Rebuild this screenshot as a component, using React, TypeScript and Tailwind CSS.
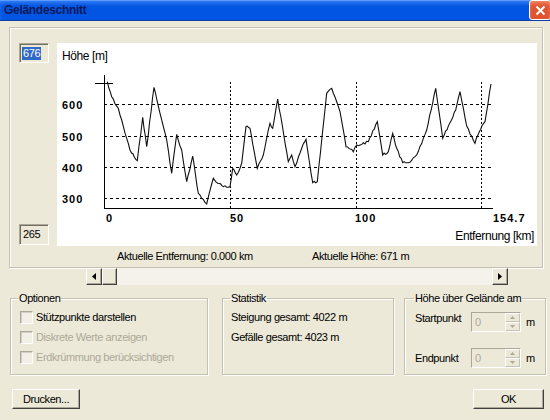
import React from "react";

const pts: [number, number][] = [
  [107.3, 81.7], [111.7, 96.7], [118.3, 108.3], [121.7, 120], [130, 150], [137.3, 160.7],
  [142.7, 117.3], [146.7, 146.7], [154, 87.3], [160, 113.3], [166.7, 140], [171.7, 173.3],
  [176.7, 134.3], [181.7, 150], [186.7, 181.7], [192.7, 156], [198.3, 193.3], [206.7, 204],
  [213.3, 178.3], [217.7, 183.3], [223.3, 186.7], [230, 186.7], [232.7, 168.3], [236.7, 175],
  [241.7, 163.3], [246, 126.7], [250, 128.3], [257.3, 168.3], [263.3, 155], [270, 123.3],
  [272.7, 128.3], [277.7, 99], [288.3, 161.7], [291.7, 155], [295, 166.7], [301.7, 148.3],
  [306, 139.3], [312.7, 182.7], [317.3, 181.7], [326.7, 93.3], [331.7, 88.3], [340, 111.7],
  [346, 146.7], [353.3, 151.7], [356.7, 145], [368.3, 141.7], [377.3, 121.7], [382.7, 155],
  [388.3, 151.7], [392.7, 133.3], [396.7, 148.3], [402.7, 162.7], [408.3, 162.7], [416.7, 155],
  [426.7, 130], [435.7, 88.3], [442.7, 138.3], [450, 122.7], [455.7, 110], [460, 91.7],
  [466.7, 126], [475, 143.3], [479.3, 131.7], [485, 121.7], [491, 84],
];

function buildPath() {
  let d = `M${pts[0][0]},${pts[0][1]}`;
  let k = 0;
  for (let i = 1; i < pts.length; i++) {
    const [x0, y0] = pts[i - 1];
    const [x1, y1] = pts[i];
    const n = Math.max(1, Math.round((x1 - x0) / 1.6));
    for (let j = 1; j <= n; j++) {
      const t = j / n;
      const x = x0 + (x1 - x0) * t;
      let y = y0 + (y1 - y0) * t;
      if (j < n) {
        const r = Math.sin(k * 78.233 + 1.3) * 43758.5453;
        y += (r - Math.floor(r) - 0.5) * 2.6;
      }
      k++;
      d += ` L${x.toFixed(1)},${y.toFixed(1)}`;
    }
  }
  return d;
}

const profilePath = buildPath();

function Chart() {
  const hGrid = [104, 136, 167, 198];
  const vGrid = [230, 356, 481];
  const yLabels = ["600", "500", "400", "300"];
  return (
    <svg width="480" height="203" viewBox="57 43 480 203" className="block">
      <rect x="57" y="43" width="480" height="203" fill="#ffffff" />
      <text x="62" y="59.5" fontSize="12" fontFamily="'Liberation Sans', Arial, sans-serif" fill="#000">Höhe [m]</text>
      {hGrid.map((y) => (
        <line key={y} x1="104" x2="493" y1={y + 0.5} y2={y + 0.5} stroke="#000" strokeWidth="1" strokeDasharray="3 3" />
      ))}
      {vGrid.map((x) => (
        <line key={x} x1={x + 0.5} x2={x + 0.5} y1="82" y2="208" stroke="#000" strokeWidth="1" strokeDasharray="2 2" />
      ))}
      <line x1="104.5" x2="104.5" y1="75" y2="208.5" stroke="#000" strokeWidth="1" />
      <line x1="104" x2="493" y1="208.5" y2="208.5" stroke="#000" strokeWidth="1" />
      <line x1="95" x2="113" y1="83.5" y2="83.5" stroke="#000" strokeWidth="1" />
      <path d={profilePath} fill="none" stroke="#111" strokeWidth="1.1" />
      {yLabels.map((l, i) => (
        <text key={l} x="62" y={hGrid[i] + 4.5} fontSize="11" fontWeight="bold" letterSpacing="1" fontFamily="'Liberation Sans', Arial, sans-serif" fill="#000">{l}</text>
      ))}
      <text x="106" y="222" fontSize="11" fontWeight="bold" letterSpacing="1" fontFamily="'Liberation Sans', Arial, sans-serif">0</text>
      <text x="230" y="222" fontSize="11" fontWeight="bold" letterSpacing="1" fontFamily="'Liberation Sans', Arial, sans-serif">50</text>
      <text x="355" y="222" fontSize="11" fontWeight="bold" letterSpacing="1" fontFamily="'Liberation Sans', Arial, sans-serif">100</text>
      <text x="493" y="222" fontSize="11" fontWeight="bold" letterSpacing="1" fontFamily="'Liberation Sans', Arial, sans-serif">154.7</text>
      <text x="534" y="239.5" textAnchor="end" fontSize="12" fontFamily="'Liberation Sans', Arial, sans-serif">Entfernung [km]</text>
    </svg>
  );
}

function Checkbox({ label, disabled }: { label: string; disabled?: boolean }) {
  return (
    <div className="flex items-center h-[20px]">
      <div className="w-[13px] h-[13px] border border-t-[#a9a699] border-l-[#a9a699] border-b-white border-r-white bg-[#f2f0e6] shadow-[inset_1px_1px_0_#d4d0c4]" />
      <span className={disabled ? "ml-[3px] text-[#aca899]" : "ml-[3px] text-black"}>{label}</span>
    </div>
  );
}

function Spin() {
  return (
    <div className="flex w-[50px] h-[20px] border border-t-[#aca899] border-l-[#aca899] border-b-white border-r-white bg-[#ece9d8]">
      <div className="flex-1 pl-[3px] text-[#aca899] leading-[18px]">0</div>
      <div className="flex flex-col w-[15px]">
        <div className="flex-1 flex items-center justify-center border border-t-white border-l-white border-r-[#c5c2b2] border-b-[#c5c2b2] bg-[#ece9d8]">
          <svg width="5" height="3" viewBox="0 0 5 3"><path d="M2.5 0 L5 3 L0 3 Z" fill="#aca899" /></svg>
        </div>
        <div className="flex-1 flex items-center justify-center border border-t-white border-l-white border-r-[#c5c2b2] border-b-[#c5c2b2] bg-[#ece9d8]">
          <svg width="5" height="3" viewBox="0 0 5 3"><path d="M0 0 L5 0 L2.5 3 Z" fill="#aca899" /></svg>
        </div>
      </div>
    </div>
  );
}

export default function App() {
  return (
    <div className="w-[550px] h-[420px] overflow-hidden bg-[#ece9d8] font-['Liberation_Sans',Arial,sans-serif] text-[11px] tracking-[-0.4px] text-black">
      {/* Title bar */}
      <div className="h-[21px] flex items-center justify-between bg-[#0255e2] shadow-[inset_0_1px_0_#5b9bff,inset_0_4px_4px_-1px_#3a82f6] border-b border-[#0a3fa8]">
        <span className="pl-[4px] text-[12px] font-bold tracking-[-0.3px] text-[#0b1a5c]">Geländeschnitt</span>
        <div className="w-[22px] h-[20px] -mr-[1px] rounded-[3px] border border-white bg-[#e0542f] shadow-[inset_0_3px_4px_-1px_#f29070] flex items-center justify-center">
          <svg width="11" height="11" viewBox="0 0 11 11"><path d="M1.5 1.5 L9.5 9.5 M9.5 1.5 L1.5 9.5" stroke="#fff" strokeWidth="2" /></svg>
        </div>
      </div>

      {/* Upper group frame */}
      <div className="mt-[6px] ml-[9px] w-[534px] h-[241px] border border-[#c4c1b1] shadow-[inset_1px_1px_0_#ffffff,1px_1px_0_#ffffff] pt-[15px] pl-[9px]">
        <div className="flex gap-[8px]">
          <div className="w-[30px] h-[203px] flex flex-col justify-between pb-[1px]">
            <div className="h-[20px] border border-t-[#aca899] border-l-[#aca899] border-b-white border-r-white shadow-[inset_1px_1px_0_#716f64] flex items-center pl-[2px]">
              <span className="bg-[#316ac5] text-white leading-[13px] px-[1px]">676</span>
            </div>
            <div className="h-[21px] border border-t-[#aca899] border-l-[#aca899] border-b-white border-r-white shadow-[inset_1px_1px_0_#716f64] flex items-center pl-[3px]">
              <span>265</span>
            </div>
          </div>
          <Chart />
        </div>
        <div className="h-[20px] flex items-center pl-[98px]">
          <span className="w-[195px]">Aktuelle Entfernung: 0.000 km</span>
          <span>Aktuelle Höhe: 671 m</span>
        </div>
      </div>

      {/* Scrollbar */}
      <div className="ml-[86px] w-[422px] h-[17px] flex bg-[#f4f2ea]">
        <div className="w-[16px] h-[17px] flex items-center justify-center bg-[#ece9d8] border border-t-white border-l-white border-r-[#404040] border-b-[#404040] shadow-[inset_-1px_-1px_0_#aca899]">
          <svg width="4" height="7" viewBox="0 0 4 7"><path d="M4 0 L0 3.5 L4 7 Z" fill="#000" /></svg>
        </div>
        <div className="w-[15px] h-[17px] bg-[#ece9d8] border border-t-white border-l-white border-r-[#404040] border-b-[#404040] shadow-[inset_-1px_-1px_0_#aca899]" />
        <div className="flex-1" />
        <div className="w-[16px] h-[17px] flex items-center justify-center bg-[#ece9d8] border border-t-white border-l-white border-r-[#404040] border-b-[#404040] shadow-[inset_-1px_-1px_0_#aca899]">
          <svg width="4" height="7" viewBox="0 0 4 7"><path d="M0 0 L4 3.5 L0 7 Z" fill="#000" /></svg>
        </div>
      </div>

      {/* Groups */}
      <div className="mt-[7px] pl-[10px] flex">
        <fieldset className="w-[198px] h-[83px] border border-[#c4c1b1] shadow-[inset_1px_1px_0_#ffffff,1px_1px_0_#ffffff] pl-[9px]">
          <legend className="ml-[-2px] px-[1px] leading-[13px]">Optionen</legend>
          <div className="mt-[2px] flex flex-col">
            <Checkbox label="Stützpunkte darstellen" />
            <Checkbox label="Diskrete Werte anzeigen" disabled />
            <Checkbox label="Erdkrümmung berücksichtigen" disabled />
          </div>
        </fieldset>
        <fieldset className="ml-[14px] w-[172px] h-[83px] border border-[#c4c1b1] shadow-[inset_1px_1px_0_#ffffff,1px_1px_0_#ffffff] pl-[8px]">
          <legend className="ml-[-1px] px-[1px] leading-[13px]">Statistik</legend>
          <div className="mt-[2px] flex flex-col">
            <div className="h-[20px] flex items-center">Steigung gesamt: 4022 m</div>
            <div className="h-[20px] flex items-center">Gefälle gesamt: 4023 m</div>
          </div>
        </fieldset>
        <fieldset className="ml-[10px] w-[142px] h-[83px] border border-[#c4c1b1] shadow-[inset_1px_1px_0_#ffffff,1px_1px_0_#ffffff] pl-[10px]">
          <legend className="ml-[-1px] px-[1px] leading-[13px]">Höhe über Gelände am</legend>
          <div className="mt-[7px] flex items-start h-[20px]">
            <span className="w-[56px] leading-[13px]">Startpunkt</span>
            <Spin />
            <span className="ml-[5px] self-center">m</span>
          </div>
          <div className="mt-[16px] flex items-center h-[20px]">
            <span className="w-[56px]">Endpunkt</span>
            <Spin />
            <span className="ml-[5px]">m</span>
          </div>
        </fieldset>
      </div>

      {/* Buttons */}
      <div className="mt-[14px] flex justify-between pl-[12px] pr-[6px]">
        <button className="w-[68px] h-[20px] bg-[#ece9d8] border border-t-white border-l-white border-r-[#404040] border-b-[#404040] shadow-[inset_-1px_-1px_0_#aca899] flex items-center justify-center">Drucken...</button>
        <button className="w-[71px] h-[20px] bg-[#ece9d8] border border-t-white border-l-white border-r-[#404040] border-b-[#404040] shadow-[inset_-1px_-1px_0_#aca899] flex items-center justify-center">OK</button>
      </div>
    </div>
  );
}
